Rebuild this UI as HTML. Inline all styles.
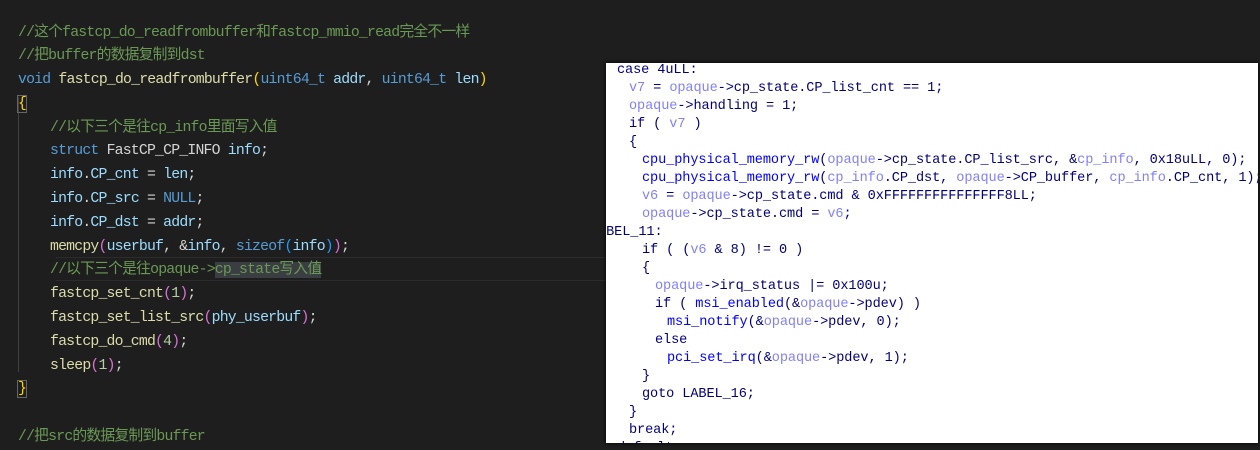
<!DOCTYPE html>
<html><head><meta charset="utf-8"><style>
html,body{margin:0;padding:0;}
body{width:1260px;height:448px;background:#1e1e1e;position:relative;overflow:hidden;}
.ed{position:absolute;left:0;top:21.5px;font-family:"Liberation Mono","Noto Sans CJK SC",monospace;font-size:14.8px;letter-spacing:-0.8px;line-height:23.8px;color:#d4d4d4;}
.ed div{white-space:pre;}
.l{height:23.8px;padding-left:18px;position:relative;}
.i{padding-left:50px;}
.c{color:#6a9955}.k{color:#569cd6}.f{color:#dcdcaa}.v{color:#9cdcfe}.n{color:#b5cea8}.t{color:#4ec9b0}
.p1{color:#ffd700}.p2{color:#da70d6}.p3{color:#179fff}
.cur{position:absolute;left:56px;top:257px;width:550px;height:22px;border-top:1px solid #2c2c2c;border-bottom:1px solid #2c2c2c;}
.guide{position:absolute;left:18px;top:97px;width:1px;height:275px;background:#404040;}
.box{outline:1px solid #666;}
.hl{background:#3a3d41;}
.pn{position:absolute;left:606px;top:63px;width:652px;height:380px;background:#fff;overflow:hidden;box-shadow:0 0 4px #000;}
.r{position:absolute;left:0;top:-1px;font-family:"Liberation Mono",monospace;font-size:13.6px;letter-spacing:-0.1px;line-height:18px;color:#000080;}
.r div{height:18px;white-space:pre;}
.u{color:#8080ff}.b{color:#0000ff}
</style></head><body>
<div class="cur"></div>
<div class="guide"></div>
<div class="ed"><div class="l c">//这个fastcp_do_readfrombuffer和fastcp_mmio_read完全不一样</div><div class="l c">//把buffer的数据复制到dst</div><div class="l"><span class="k">void</span> <span class="f">fastcp_do_readfrombuffer</span><span class="p1">(</span><span class="k">uint64_t</span> <span class="v">addr</span>, <span class="k">uint64_t</span> <span class="v">len</span><span class="p1">)</span></div><div class="l"><span class="p1 box">{</span></div><div class="l i c">//以下三个是往cp_info里面写入值</div><div class="l i"><span class="k">struct</span> FastCP_CP_INFO <span class="v">info</span>;</div><div class="l i"><span class="v">info</span>.<span class="v">CP_cnt</span> = <span class="v">len</span>;</div><div class="l i"><span class="v">info</span>.<span class="v">CP_src</span> = <span class="k">NULL</span>;</div><div class="l i"><span class="v">info</span>.<span class="v">CP_dst</span> = <span class="v">addr</span>;</div><div class="l i"><span class="f">memcpy</span><span class="p2">(</span><span class="v">userbuf</span>, &amp;<span class="v">info</span>, <span class="k">sizeof</span><span class="p3">(</span><span class="v">info</span><span class="p3">)</span><span class="p2">)</span>;</div><div class="l i c">//以下三个是往opaque-&gt;<span class="hl">cp_state写入值</span></div><div class="l i"><span class="f">fastcp_set_cnt</span><span class="p2">(</span><span class="n">1</span><span class="p2">)</span>;</div><div class="l i"><span class="f">fastcp_set_list_src</span><span class="p2">(</span><span class="v">phy_userbuf</span><span class="p2">)</span>;</div><div class="l i"><span class="f">fastcp_do_cmd</span><span class="p2">(</span><span class="n">4</span><span class="p2">)</span>;</div><div class="l i"><span class="f">sleep</span><span class="p2">(</span><span class="n">1</span><span class="p2">)</span>;</div><div class="l"><span class="p1 box">}</span></div><div class="l"></div><div class="l c">//把src的数据复制到buffer</div></div>
<div class="pn"><div class="r"><div style="padding-left:11px">case 4uLL:</div><div style="padding-left:23px"><span class="u">v7</span> = <span class="u">opaque</span>-&gt;cp_state.CP_list_cnt == 1;</div><div style="padding-left:23px"><span class="u">opaque</span>-&gt;handling = 1;</div><div style="padding-left:23px">if ( <span class="u">v7</span> )</div><div style="padding-left:23px">{</div><div style="padding-left:36px"><span class="b">cpu_physical_memory_rw</span>(<span class="u">opaque</span>-&gt;cp_state.CP_list_src, &amp;<span class="u">cp_info</span>, 0x18uLL, 0);</div><div style="padding-left:36px"><span class="b">cpu_physical_memory_rw</span>(<span class="u">cp_info</span>.CP_dst, <span class="u">opaque</span>-&gt;CP_buffer, <span class="u">cp_info</span>.CP_cnt, 1);</div><div style="padding-left:36px"><span class="u">v6</span> = <span class="u">opaque</span>-&gt;cp_state.cmd &amp; 0xFFFFFFFFFFFFFFF8LL;</div><div style="padding-left:36px"><span class="u">opaque</span>-&gt;cp_state.cmd = <span class="u">v6</span>;</div><div style="margin-left:-16px">LABEL_11:</div><div style="padding-left:36px">if ( (<span class="u">v6</span> &amp; 8) != 0 )</div><div style="padding-left:36px">{</div><div style="padding-left:49px"><span class="u">opaque</span>-&gt;irq_status |= 0x100u;</div><div style="padding-left:49px">if ( <span class="b">msi_enabled</span>(&amp;<span class="u">opaque</span>-&gt;pdev) )</div><div style="padding-left:61px"><span class="b">msi_notify</span>(&amp;<span class="u">opaque</span>-&gt;pdev, 0);</div><div style="padding-left:49px">else</div><div style="padding-left:61px"><span class="b">pci_set_irq</span>(&amp;<span class="u">opaque</span>-&gt;pdev, 1);</div><div style="padding-left:36px">}</div><div style="padding-left:36px">goto LABEL_16;</div><div style="padding-left:23px">}</div><div style="padding-left:23px">break;</div><div style="padding-left:11px">default:</div></div></div>
</body></html>
